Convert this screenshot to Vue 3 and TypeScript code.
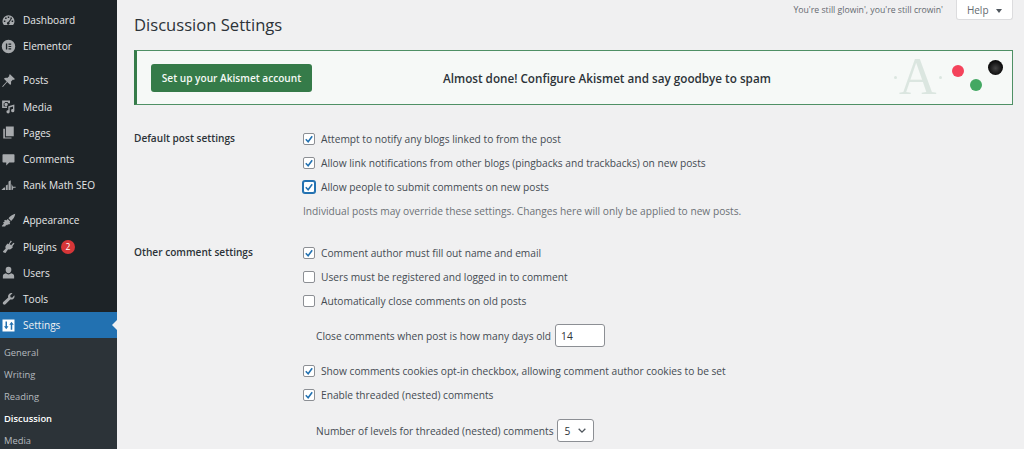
<template>
  <div class="admin">
    <aside class="sidebar">
      <ul class="menu">
        <li
          v-for="item in menu"
          :key="item.label"
          class="menu-item"
          :class="{ current: item.current, gap: item.gap }"
        >
          <svg class="menu-icon" viewBox="0 0 20 20" aria-hidden="true">
            <path :d="item.icon" fill-rule="evenodd" />
          </svg>
          <span>{{ item.label }}</span>
          <span v-if="item.badge" class="badge">{{ item.badge }}</span>
        </li>
      </ul>
      <ul class="submenu">
        <li v-for="sub in submenu" :key="sub" :class="{ active: sub === 'Discussion' }">{{ sub }}</li>
      </ul>
    </aside>

    <main class="content">
      <div class="topline">
        <h1>Discussion Settings</h1>
        <div class="top-right">
          <span class="dolly">You're still glowin', you're still crowin'</span>
          <button class="help">Help <i class="caret"></i></button>
        </div>
      </div>

      <div class="akismet">
        <button class="akismet-btn">Set up your Akismet account</button>
        <p class="akismet-text">Almost done! Configure Akismet and say goodbye to spam</p>
        <div class="akismet-art">
          <span class="big-a"><i class="dot"></i>A<i class="dot"></i></span>
          <i class="ball red"></i>
          <i class="ball green"></i>
          <i class="ball black"></i>
        </div>
      </div>

      <section class="form-row first">
        <div class="form-label">Default post settings</div>
        <div class="form-fields">
          <label v-for="opt in postOptions" :key="opt.text" class="check">
            <span class="box" :class="{ focused: opt.focused }">
              <svg v-if="opt.on" viewBox="0 0 14 14"><path d="M2.500 7.400 5.800 10.800 11.500 3.200" /></svg>
            </span>
            {{ opt.text }}
          </label>
          <p class="hint">Individual posts may override these settings. Changes here will only be applied to new posts.</p>
        </div>
      </section>

      <section class="form-row second">
        <div class="form-label">Other comment settings</div>
        <div class="form-fields">
          <label v-for="opt in commentOptions" :key="opt.text" class="check">
            <span class="box">
              <svg v-if="opt.on" viewBox="0 0 14 14"><path d="M2.500 7.400 5.800 10.800 11.500 3.200" /></svg>
            </span>
            {{ opt.text }}
          </label>
          <div class="inline-field days">
            Close comments when post is how many days old
            <span class="input">14</span>
          </div>
          <label v-for="opt in threadOptions" :key="opt" class="check">
            <span class="box">
              <svg viewBox="0 0 14 14"><path d="M2.500 7.400 5.800 10.800 11.500 3.200" /></svg>
            </span>
            {{ opt }}
          </label>
          <div class="inline-field levels">
            Number of levels for threaded (nested) comments
            <span class="select">5
              <svg viewBox="0 0 12 8"><path d="M2 2 6 6 10 2" /></svg>
            </span>
          </div>
        </div>
      </section>
    </main>
  </div>
</template>

<script setup lang="ts">
interface MenuItem {
  label: string;
  icon: string;
  gap?: boolean;
  current?: boolean;
  badge?: string;
}

interface CheckOption {
  text: string;
  on: boolean;
  focused?: boolean;
}

const menu: MenuItem[] = [
  {
    label: "Dashboard",
    icon: "M10 3a8 8 0 0 0-8 8c0 2 .7 3.800 2 5h12c1.300-1.200 2-3 2-5a8 8 0 0 0-8-8zM9 4.500h2v2H9zM5.500 6h2v2h-2zM12.500 6h2v2h-2zM3.800 10h2v2h-2zM14.200 10h2v2h-2zM13 7.500l1 .7-3 4.300a1.800 1.800 0 1 1-1.500-.6z",
  },
  {
    label: "Elementor",
    icon: "M10 1a9 9 0 1 0 0 18 9 9 0 0 0 0-18zM6.500 6h1.800v8H6.500zM10 6h3.600v1.600H10zM10 9.200h3.600v1.600H10zM10 12.400h3.600V14H10z",
  },
  {
    label: "Posts",
    gap: true,
    icon: "M12 1.500 18.500 8l-1.300 1.200-1.200-.5-2.800 2.900c.6 1.600.4 3.200-.8 4.400L8.300 11.900 2.500 18.500 1.500 18 7.600 11.200 3.900 7.500c1.200-1.200 2.800-1.400 4.400-.8L11.200 4l-.5-1.200z",
  },
  {
    label: "Media",
    icon: "M1.500 2h10.500v3.500h-2.200L8.800 4H5.500L4.500 5.500H3.500v4.500h4.500v2H1.500zM6.800 5a2.300 2.300 0 1 1 0 4.600 2.300 2.300 0 0 1 0-4.600zM9.800 9.500l8-2.200v8.200a2.200 2.200 0 1 1-1.800-2.100V10l-4.400 1.200v5.800a2.200 2.200 0 1 1-1.800-2.100z",
  },
  {
    label: "Pages",
    icon: "M6.500 2H17v13H6.500zM3 5h2.200v11.500H14V18H3z",
  },
  {
    label: "Comments",
    icon: "M3 3h14a1 1 0 0 1 1 1v9a1 1 0 0 1-1 1h-6l-4 4v-4H3a1 1 0 0 1-1-1V4a1 1 0 0 1 1-1z",
  },
  {
    label: "Rank Math SEO",
    icon: "M.5 16l3.500-3.500H5.500V16zM6.500 16v-6l2.500-1.500V16zM10 16V4.500l3-1.500v13zM14 16V8l2 3.500h3.500v1.500H16.500L15.500 16z",
  },
  {
    label: "Appearance",
    gap: true,
    icon: "M19 1c-.5 4-3 7.500-5.500 9.500l-3.500-3.500C12 4 15.500 1.800 19 1zM9 8l3.500 3.500-1.200 1.500 1 1-1.800 1.500-1-1-1.500 2L7 15.500 5.500 18H1.500L1 17.200l3-3.200-1.500-1 2.500-1.800-1-1 1.800-1.200 1 1z",
  },
  {
    label: "Plugins",
    badge: "2",
    icon: "M13 2l1.500 1.200-3 3.500 2 1.700 3-3.500L18 6.100l-3 3.500 1 1-1.500 1.800c-1.600 1.700-3.500 2-5 1.300L6 18.500 3.500 18l-1-1.500 3.800-4c-.8-1.500-.5-3.300 1-4.800L9 6l1 1z",
  },
  {
    label: "Users",
    icon: "M10 2.500a3.800 3.800 0 0 1 3.800 4c0 2.200-1.700 4.500-3.800 4.500S6.200 8.700 6.200 6.500a3.800 3.800 0 0 1 3.800-4zM6.500 11c1 1 2.200 1.500 3.500 1.500s2.500-.5 3.500-1.500c2.500.6 4 2 4 3.500V18h-15v-3.500c0-1.500 1.500-2.900 4-3.500z",
  },
  {
    label: "Tools",
    icon: "M17.800 5.500c.6 1.800.1 3.600-1.200 4.800-1.200 1.100-2.800 1.400-4.300 1L6 17.800c-.8.800-2.200.8-3 0s-.8-2.200 0-3l6.600-6.200c-.5-1.500-.1-3.200 1-4.400 1.200-1.300 3-1.700 4.700-1.200l-3 3 .4 2.300 2.200.6z",
  },
  {
    label: "Settings",
    current: true,
    icon: "M2 2h16v16H2zM6 4.500v6.500H4l3 4 3-4H8V4.500zM13 15.500V9h-2l3-4 3 4h-2v6.500z",
  },
];

const submenu = ["General", "Writing", "Reading", "Discussion", "Media"];

const postOptions: CheckOption[] = [
  { text: "Attempt to notify any blogs linked to from the post", on: true },
  { text: "Allow link notifications from other blogs (pingbacks and trackbacks) on new posts", on: true },
  { text: "Allow people to submit comments on new posts", on: true, focused: true },
];

const commentOptions: CheckOption[] = [
  { text: "Comment author must fill out name and email", on: true },
  { text: "Users must be registered and logged in to comment", on: false },
  { text: "Automatically close comments on old posts", on: false },
];

const threadOptions = [
  "Show comments cookies opt-in checkbox, allowing comment author cookies to be set",
  "Enable threaded (nested) comments",
];
</script>

<style>
html,
body {
  margin: 0;
  height: 449px;
  overflow: hidden;
  background: #f0f0f1;
}
</style>

<style scoped>
.admin {
  display: flex;
  height: 449px;
  overflow: hidden;
  background: #f0f0f1;
  font-family: "Open Sans", "Noto Sans", sans-serif;
  font-size: 10.2px;
  color: #444b52;
}

.sidebar {
  width: 117px;
  flex-shrink: 0;
  background: #1d2327;
  padding-top: 7px;
}

.menu,
.submenu {
  list-style: none;
  margin: 0;
  padding: 0;
}

.menu-item {
  display: flex;
  align-items: center;
  height: 26.2px;
  padding-left: 1px;
  color: #e6e7e8;
  font-size: 10.1px;
  position: relative;
}

.menu-item.gap {
  margin-top: 8px;
}

.menu-item.gap ~ .gap {
  margin-top: 9px;
}

.menu-icon {
  width: 15px;
  height: 15px;
  margin-right: 7px;
  fill: #a7aaad;
  flex-shrink: 0;
}

.menu-item.current {
  background: #2271b1;
  color: #f0f0f1;
}

.menu-item.current .menu-icon {
  fill: #fff;
}

.menu-item.current::after {
  content: "";
  position: absolute;
  right: 0;
  top: 8px;
  border: 5px solid transparent;
  border-right-color: #f0f0f1;
  border-left-width: 0;
}

.badge {
  display: inline-flex;
  align-items: center;
  justify-content: center;
  width: 14px;
  height: 14px;
  margin-left: 4px;
  border-radius: 50%;
  background: #d63638;
  color: #fff;
  font-size: 8.500px;
}

.submenu {
  background: #2c3338;
  padding: 4px 0 0 4px;
  height: 111px;
  color: #b4b9be;
  font-size: 9.400px;
}

.submenu li {
  height: 22px;
  line-height: 22px;
}

.submenu .active {
  color: #fff;
  font-weight: 600;
}

.content {
  flex: 1;
  min-width: 0;
  padding: 0 11px 0 17px;
}

.topline {
  display: flex;
  justify-content: space-between;
  height: 50px;
}

h1 {
  margin: 13px 0 0;
  font-size: 16.600px;
  line-height: 24px;
  font-weight: 400;
  color: #2c3338;
}

.top-right {
  display: flex;
  align-items: flex-start;
  gap: 13px;
  height: 20px;
}

.dolly {
  margin-top: 3px;
  font-size: 8.700px;
  line-height: 14px;
  color: #646970;
}

.help {
  width: 57px;
  height: 20px;
  border: 1px solid #dcdcde;
  border-top: 0;
  border-radius: 0 0 3px 3px;
  background: #fff;
  color: #646970;
  font: inherit;
  font-size: 10px;
  padding: 0;
}

.caret {
  display: inline-block;
  margin-left: 5px;
  border: 3.500px solid transparent;
  border-top: 4.500px solid #50575e;
  border-bottom: 0;
  vertical-align: 1px;
}

.akismet {
  display: flex;
  align-items: center;
  height: 55px;
  box-sizing: border-box;
  border: 1px solid #4f9065;
  border-left: 3px solid #357b49;
  background: #f6f9f7;
  padding-left: 14px;
}

.akismet-btn {
  width: 161px;
  height: 28px;
  flex-shrink: 0;
  border: 0;
  border-radius: 3px;
  background: #357b49;
  color: #f4f9f5;
  font: inherit;
  font-size: 10.100px;
  font-weight: 600;
  padding: 0;
}

.akismet-text {
  margin: 0 0 0 131px;
  font-size: 11.700px;
  font-weight: 600;
  color: #2c3338;
  white-space: nowrap;
}

.akismet-art {
  position: relative;
  margin-left: auto;
  width: 112px;
  height: 53px;
}

.big-a {
  position: absolute;
  left: -6px;
  top: 0;
  display: flex;
  align-items: center;
  gap: 2px;
  font-family: "Liberation Serif", serif;
  font-size: 52px;
  line-height: 52px;
  color: #dbe6e0;
}

.dot {
  width: 3px;
  height: 3px;
  border-radius: 50%;
  background: #dbe6e0;
}

.ball {
  position: absolute;
  border-radius: 50%;
}

.ball.red {
  left: 52px;
  top: 14px;
  width: 12px;
  height: 12px;
  background: #f4435b;
}

.ball.green {
  left: 70px;
  top: 28px;
  width: 12px;
  height: 12px;
  background: #43a862;
}

.ball.black {
  left: 88px;
  top: 9px;
  width: 15px;
  height: 15px;
  background: radial-gradient(circle at 50% 55%, #444, #0b0b0b 65%);
}

.form-row {
  display: flex;
}

.form-row.first {
  margin-top: 22px;
}

.form-row.second {
  margin-top: 20px;
}

.form-label {
  width: 169px;
  flex-shrink: 0;
  padding-top: 4px;
  font-weight: 600;
  font-size: 10.100px;
  color: #2c3338;
  line-height: 14px;
}

.form-fields {
  flex: 1;
  min-width: 0;
}

.check {
  display: flex;
  align-items: center;
  height: 24px;
  gap: 6px;
  white-space: nowrap;
}

.box {
  display: flex;
  width: 12px;
  height: 12px;
  box-sizing: border-box;
  flex-shrink: 0;
  border: 1px solid #8c8f94;
  border-radius: 2px;
  background: #fff;
}

.box.focused {
  border-color: #2271b1;
  box-shadow: 0 0 0 1px #2271b1;
}

.box svg {
  width: 10px;
  height: 10px;
  fill: none;
  stroke: #2271b1;
  stroke-width: 2.200;
}

.hint {
  margin: 2px 0 0;
  height: 20px;
  line-height: 20px;
  color: #6c7176;
}

.inline-field {
  display: flex;
  align-items: center;
  gap: 4px;
  padding-left: 13px;
  white-space: nowrap;
}

.days {
  height: 23px;
  margin: 11px 0 12px;
}

.levels {
  height: 23px;
  margin-top: 12px;
  gap: 3px;
}

.input,
.select {
  display: flex;
  align-items: center;
  box-sizing: border-box;
  height: 23px;
  border: 1px solid #8c8f94;
  border-radius: 3px;
  background: #fff;
  color: #2c3338;
  padding-left: 5px;
}

.input {
  width: 50px;
}

.select {
  width: 37px;
  justify-content: space-between;
  padding-right: 6px;
  padding-left: 7px;
}

.select svg {
  width: 10px;
  height: 7px;
  fill: none;
  stroke: #50575e;
  stroke-width: 1.600;
}
</style>
